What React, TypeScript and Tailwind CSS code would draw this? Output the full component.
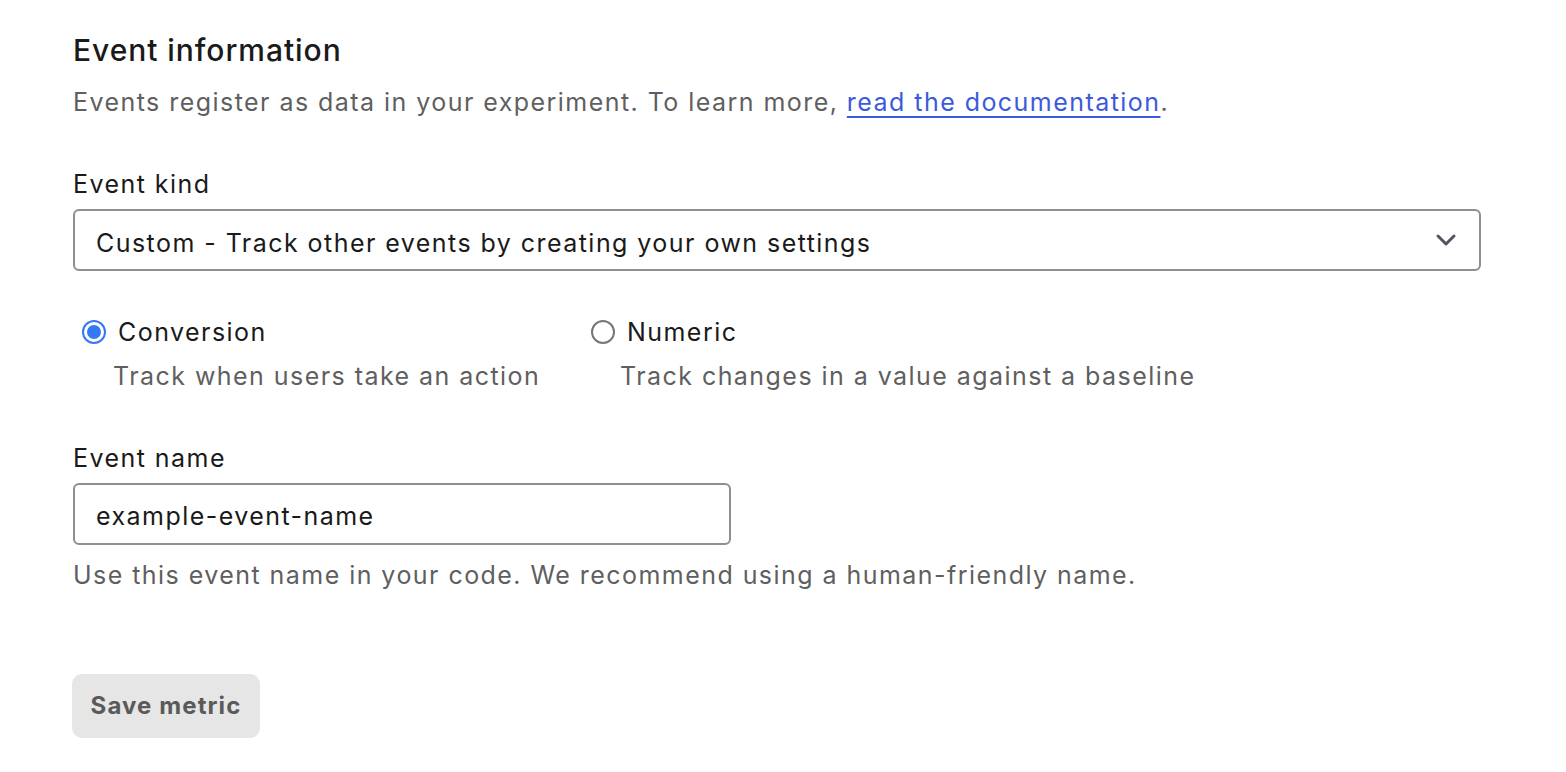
import React from "react";

export default function App() {
  return (
    <div className="flex h-[772px] w-[1566px] bg-white" style={{ fontFamily: "Inter, 'Noto Sans', sans-serif" }}>
      <div className="flex-1 pl-[73px] pr-[85px] pt-[30px]">
        <h2 className="text-[30px] leading-[40px] font-medium tracking-[0.95px] text-[#1a1a1a]">Event information</h2>
        <p className="mt-[16px] text-[25px] leading-[32px] tracking-[1.45px] text-[#5f5f5f]">
          Events register as data in your experiment. To learn more,{" "}
          <a href="#" className="text-[#3b5bdb] underline underline-offset-[5px] decoration-[2px]">read the documentation</a>.
        </p>

        <div className="mt-[50px] text-[25px] leading-[32px] tracking-[1.45px] text-[#1a1a1a]">Event kind</div>
        <div className="mt-[9px] flex h-[62px] w-[1408px] items-center justify-between rounded-[6px] border-2 border-[#8e8e93] pl-[21px] pr-[22px]">
          <span className="pt-[8px] text-[25px] tracking-[1.45px] text-[#1a1a1a]">Custom - Track other events by creating your own settings</span>
          <svg width="22" height="14" viewBox="0 0 22 14" fill="none">
            <path d="M3 3l8 8 8-8" stroke="#4f5560" strokeWidth="3" strokeLinecap="round" strokeLinejoin="round" />
          </svg>
        </div>

        <div className="mt-[45px] flex">
          <div className="w-[518px] pl-[9px]">
            <div className="flex h-[32px] items-center gap-[12px]">
              <span className="flex h-[24px] w-[24px] items-center justify-center rounded-full border-[2px] border-[#3478f6]">
                <span className="h-[14px] w-[14px] rounded-full bg-[#3478f6]" />
              </span>
              <span className="text-[25px] leading-[32px] tracking-[1.45px] text-[#1a1a1a]">Conversion</span>
            </div>
            <div className="mt-[12px] pl-[31px] text-[25px] leading-[32px] tracking-[1.45px] text-[#5f5f5f]">Track when users take an action</div>
          </div>
          <div>
            <div className="flex h-[32px] items-center gap-[12px]">
              <span className="h-[24px] w-[24px] rounded-full border-[2px] border-[#767676]" />
              <span className="text-[25px] leading-[32px] tracking-[1.45px] text-[#1a1a1a]">Numeric</span>
            </div>
            <div className="mt-[12px] pl-[29px] text-[25px] leading-[32px] tracking-[1.45px] text-[#5f5f5f]">Track changes in a value against a baseline</div>
          </div>
        </div>

        <div className="mt-[50px] text-[25px] leading-[32px] tracking-[1.45px] text-[#1a1a1a]">Event name</div>
        <div className="mt-[9px] flex h-[62px] w-[658px] items-center rounded-[6px] border-2 border-[#8e8e93] pl-[21px]">
          <span className="pt-[5px] text-[25px] tracking-[1.45px] text-[#1a1a1a]">example-event-name</span>
        </div>
        <p className="mt-[14px] text-[25px] leading-[32px] tracking-[1.45px] text-[#5f5f5f]">Use this event name in your code. We recommend using a human-friendly name.</p>

        <button className="mt-[83px] ml-[-1px] block h-[64px] w-[188px] rounded-[10px] bg-[#e6e6e6] text-[24px] font-bold tracking-[1.1px] text-[#5a5a5a]">
          Save metric
        </button>
      </div>
      <div className="h-full w-[2px] bg-[#e6e6e6]" />
      <div className="h-full w-[2px] bg-[#fafafa]" />
    </div>
  );
}
